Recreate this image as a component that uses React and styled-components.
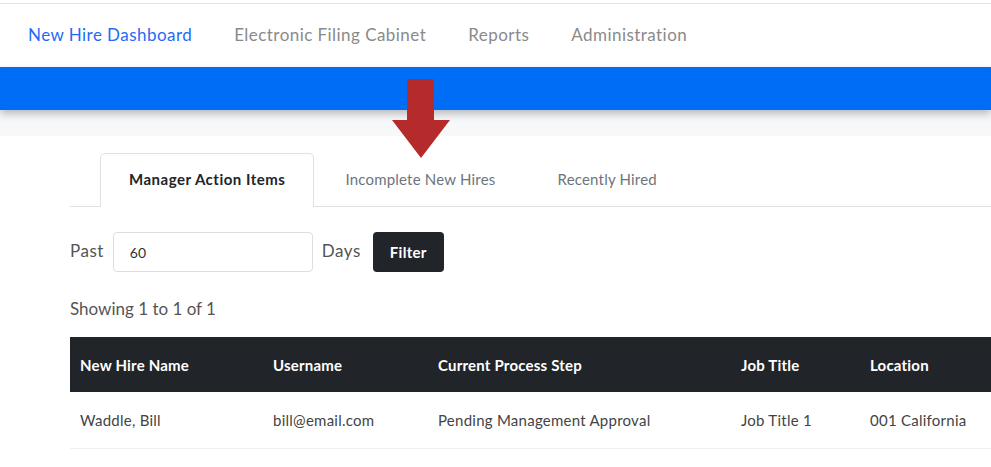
import React from 'react'
import styled, { createGlobalStyle } from 'styled-components'

const Global = createGlobalStyle`
  html, body { margin: 0; padding: 0; background: #fff; }
  body { font-family: Lato, "Liberation Sans", sans-serif; color: #212529; overflow: hidden; }
  * { box-sizing: border-box; }
`

const TopNav = styled.nav`
  height: 64px;
  border-top: 1px solid #e3e3e3;
  margin-top: 3px;
  display: flex;
  align-items: center;
  padding-left: 28px;
  gap: 42px;
  background: #fff;
`

const NavLink = styled.a`
  font-size: 17px;
  letter-spacing: 0.45px;
  color: ${p => (p.active ? '#1f6bf5' : '#8a8a8a')};
  text-decoration: none;
  margin-top: -3px;
`

const Banner = styled.div`
  height: 43px;
  background: #006df6;
  box-shadow: 0 4px 8px rgba(0, 0, 0, 0.25);
  position: relative;
  z-index: 1;
`

const Strip = styled.div`
  height: 26px;
  background: #f7f8fa;
`

const Main = styled.main`
  padding: 17px 0 0 70px;
  position: relative;
`

const Arrow = styled.svg`
  position: absolute;
  left: 392px;
  top: -57px;
  z-index: 2;
`

const Tabs = styled.div`
  display: flex;
  padding-left: 30px;
  border-bottom: 1px solid #dee2e6;
`

const Tab = styled.div`
  height: 54px;
  display: flex;
  align-items: center;
  padding: 0 ${p => (p.active ? '28px' : '30px')} 3px;
  font-size: 15px;
  letter-spacing: ${p => (p.active ? '0.5px' : '0.2px')};
  font-weight: ${p => (p.active ? 700 : 400)};
  color: ${p => (p.active ? '#212529' : '#6c757d')};
  border: 1px solid ${p => (p.active ? '#dee2e6' : 'transparent')};
  border-bottom: none;
  border-radius: 5px 5px 0 0;
  background: ${p => (p.active ? '#fff' : 'transparent')};
  margin-bottom: -1px;
`

const FilterRow = styled.div`
  display: flex;
  align-items: center;
  gap: 9px;
  margin-top: 25px;
`

const Label = styled.span`
  font-size: 17px;
  letter-spacing: 0.5px;
  color: #555;
  margin-top: -3px;
`

const Input = styled.input`
  width: 200px;
  height: 40px;
  border: 1px solid #dedede;
  border-radius: 4px;
  padding: 0 16px;
  font-family: inherit;
  font-size: 14px;
  color: #333;
`

const Button = styled.button`
  height: 40px;
  padding: 0 17px;
  border: none;
  border-radius: 4px;
  background: #212529;
  color: #fff;
  font-family: inherit;
  font-size: 15px;
  letter-spacing: 0.3px;
  font-weight: 700;
  margin-left: 3px;
`

const Showing = styled.div`
  font-size: 17px;
  color: #555;
  margin-top: 26px;
`

const Table = styled.table`
  width: calc(100% + 40px);
  border-collapse: collapse;
  margin-top: 18px;
`

const Th = styled.th`
  background: #212529;
  color: #fff;
  font-size: 15px;
  letter-spacing: 0.2px;
  font-weight: 700;
  text-align: left;
  height: 55px;
  padding: 0 10px;
  width: ${p => p.w}px;
`

const Td = styled.td`
  font-size: 15px;
  letter-spacing: 0.25px;
  color: #444;
  height: 56px;
  padding: 0 10px;
  border-bottom: 1px solid #eef0f2;
`

const cols = [
  ['New Hire Name', 193],
  ['Username', 165],
  ['Current Process Step', 303],
  ['Job Title', 129],
  ['Location', 171],
]

const row = ['Waddle, Bill', 'bill@email.com', 'Pending Management Approval', 'Job Title 1', '001 California']

export default function App() {
  return (
    <>
      <Global />
      <TopNav>
        <NavLink active>New Hire Dashboard</NavLink>
        <NavLink>Electronic Filing Cabinet</NavLink>
        <NavLink>Reports</NavLink>
        <NavLink>Administration</NavLink>
      </TopNav>
      <Banner />
      <Strip />
      <Main>
        <Arrow width="58" height="79" viewBox="0 0 58 79">
          <path d="M15 0 H42 V41 H58 L29 79 L0 41 H15 Z" fill="#b52a2a" />
        </Arrow>
        <Tabs>
          <Tab active>Manager Action Items</Tab>
          <Tab>Incomplete New Hires</Tab>
          <Tab>Recently Hired</Tab>
        </Tabs>
        <FilterRow>
          <Label>Past</Label>
          <Input defaultValue="60" />
          <Label>Days</Label>
          <Button>Filter</Button>
        </FilterRow>
        <Showing>Showing 1 to 1 of 1</Showing>
        <Table>
          <thead>
            <tr>
              {cols.map(([c, w]) => <Th key={c} w={w}>{c}</Th>)}
            </tr>
          </thead>
          <tbody>
            <tr>
              {row.map(v => <Td key={v}>{v}</Td>)}
            </tr>
          </tbody>
        </Table>
      </Main>
    </>
  )
}
